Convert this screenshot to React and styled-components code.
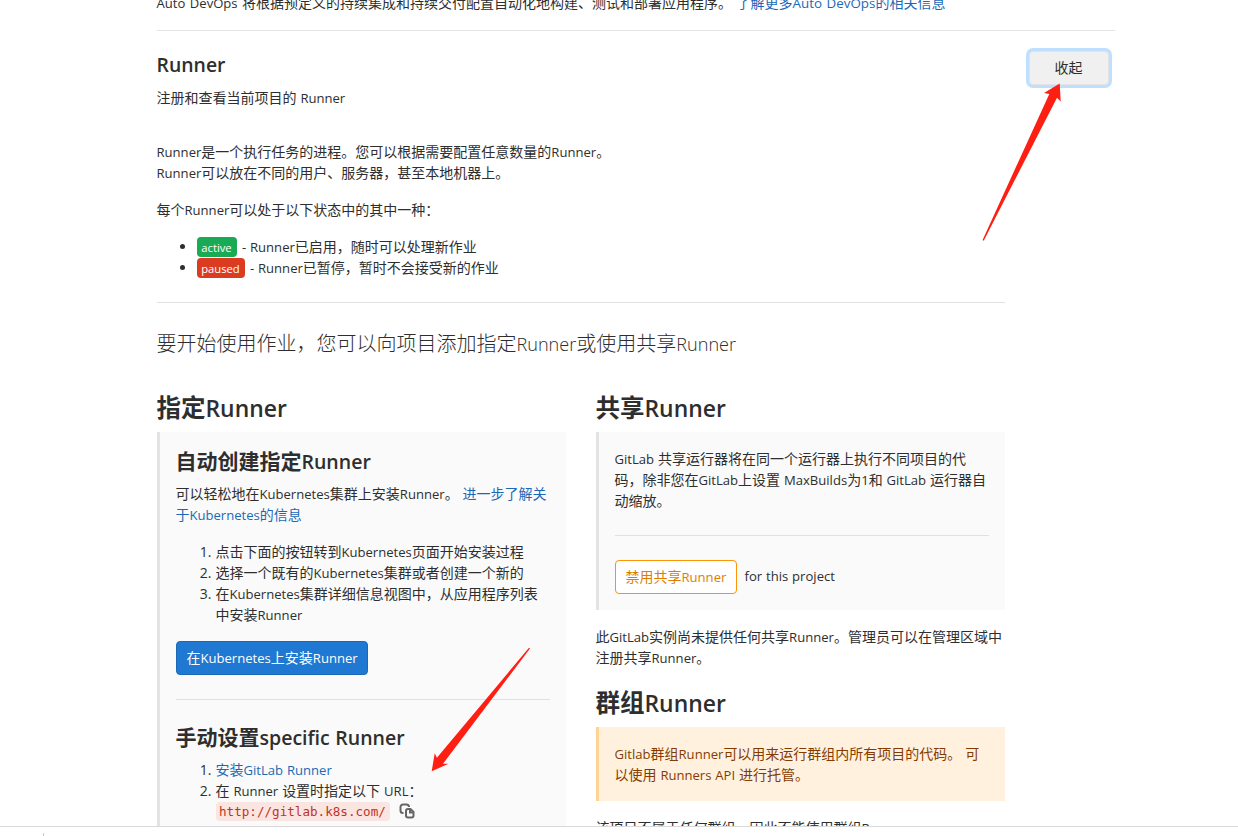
import React from 'react';
import styled, { createGlobalStyle } from 'styled-components';

const GlobalStyle = createGlobalStyle`
  * { box-sizing: border-box; }
  html, body { margin: 0; background: #fff; overflow: hidden; }
  body {
    font-family: "Open Sans", "Noto Sans CJK SC", sans-serif;
    font-size: 14px;
    line-height: 21px;
    word-spacing: 0.5px;
    color: #2e2e2e;
  }
`;

const Latin = styled.span`
  font-size: ${(p) => p.$scale || 0.935}em;
  line-height: 0;
`;

// Sets Latin runs slightly smaller so they sit evenly beside Chinese glyphs.
function T({ children, scale }) {
  return String(children)
    .split(/([\x20-\x7e]+)/)
    .map((part, i) => (i % 2 ? <Latin key={i} $scale={scale}>{part}</Latin> : part));
}

const Screen = styled.div`
  position: relative;
  height: 836px;
  overflow: hidden;
  display: flex;
  flex-direction: column;
`;

const Viewport = styled.main`
  height: 826px;
  overflow: hidden;
  padding: 0 123px 0 156.5px;
`;

const BottomBar = styled.footer`
  height: 10px;
  border-top: 1px solid #d9d9d9;
  padding: 6px 0 0 43px;
`;

const Tick = styled.div`
  width: 1px;
  height: 3px;
  background: #c8c8c8;
`;

const Link = styled.a`
  color: #1b69b6;
  text-decoration: none;
`;

const Text = styled.p`
  margin: 0 0 ${(p) => p.$gap ?? 16}px;
  white-space: nowrap;
`;

const DevOps = styled.section`
  margin-top: -8px;
  padding-bottom: 17px;
  border-bottom: 1px solid #e5e5e5;
  word-spacing: 1.1px;
`;

const SectionHead = styled.header`
  display: flex;
  justify-content: space-between;
  padding: 20px 6px 0 0;
  height: 110px;
`;

const Title = styled.h4`
  margin: 0 0 10px;
  padding-top: 1px;
  font-size: 21px;
  line-height: 25px;
  font-weight: 600;
`;

const SubTitle = styled.h4`
  margin: 0 0 9px;
  font-size: 21px;
  line-height: 26px;
  font-weight: 600;
  white-space: nowrap;
`;

const ColumnTitle = styled.h3`
  margin: ${(p) => (p.$spaced ? 19 : 0)}px 0 8px;
  font-size: 24.5px;
  line-height: 32px;
  font-weight: 600;
`;

const Lead = styled.p`
  margin: 0 0 33px;
  font-size: 20px;
  line-height: 30px;
  font-weight: 300;
  white-space: nowrap;
`;

const Button = styled.button`
  height: 34px;
  padding: 0 10px 2px;
  border-radius: 4px;
  border: 1px solid #e3e3e3;
  background: #f0f0f0;
  color: #2e2e2e;
  font: inherit;
  word-spacing: inherit;
  white-space: nowrap;
`;

const ToggleButton = styled(Button)`
  width: 80px;
  padding: 0 1px 2px 0;
  box-shadow: 0 0 0 3px #bfdfff;
`;

const PrimaryButton = styled(Button)`
  width: 192px;
  background: #1f78d1;
  border-color: #1b69b6;
  color: #fff;
`;

const WarningButton = styled(Button)`
  width: 122px;
  background: #fff;
  border-color: #fc9403;
  color: #de7e00;
`;

const Content = styled.div`
  width: 848.5px;
`;

const Divider = styled.hr`
  margin: ${(p) => p.$top}px 0 ${(p) => p.$bottom}px;
  border: 0;
  height: 1px;
  background: #e1e1e1;
`;

const List = styled.ul`
  margin: 0 0 16px;
  padding-left: 40px;
`;

const Badge = styled.span`
  display: inline-block;
  height: 20px;
  padding: 0 4px;
  width: ${(p) => p.$width}px;
  border-radius: 4px;
  background: ${(p) => p.$color};
  color: #fff;
  font-size: 12px;
  line-height: 21px;
  text-align: center;
  vertical-align: top;
  margin: 1px 1.5px 0 0;
`;

const Columns = styled.div`
  display: grid;
  grid-template-columns: 409px 409px;
  gap: 30px;
`;

const Well = styled.div`
  padding: 16px;
  border-left: 3px solid ${(p) => (p.$warn ? '#ffd393' : '#e3e3e3')};
  background: ${(p) => (p.$warn ? '#fff1de' : '#fafafa')};
  color: ${(p) => (p.$warn ? '#853b00' : 'inherit')};
  margin-bottom: 16px;
`;

const Inline = styled.div`
  display: flex;
  align-items: center;
  gap: 8px;
`;

const Note = styled.span`
  padding-bottom: 3px;
`;

const CodeLine = styled.div`
  display: flex;
  align-items: center;
  height: 21px;
`;

const Code = styled.code`
  height: 19px;
  padding: 0 3.5px;
  width: 174px;
  border-radius: 4px;
  background: #fbe5e1;
  color: #c0341d;
  font-family: "DejaVu Sans Mono", monospace;
  font-size: 12.6px;
  line-height: 19px;
`;

const CopyIcon = styled.svg`
  width: 16px;
  height: 16px;
  margin: 0 0 2px 9px;
`;

const Arrows = styled.svg`
  position: absolute;
  inset: 0;
  width: 1238px;
  height: 836px;
  pointer-events: none;
`;

export default function App() {
  return (
    <>
      <GlobalStyle />
      <Screen>
        <Viewport>
          <DevOps>
            <Text $gap={0}>
              <T>Auto DevOps 将根据预定义的持续集成和持续交付配置自动化地构建、测试和部署应用程序。 </T>
              <Link><T scale={0.955}>了解更多Auto DevOps的相关信息</T></Link>
            </Text>
          </DevOps>
          <SectionHead>
            <div>
              <Title><T scale={0.925}>Runner</T></Title>
              <Text><T>注册和查看当前项目的 Runner</T></Text>
            </div>
            <ToggleButton>收起</ToggleButton>
          </SectionHead>
          <Content>
            <Text>
              <T>Runner是一个执行任务的进程。您可以根据需要配置任意数量的Runner。</T><br />
              <T>Runner可以放在不同的用户、服务器，甚至本地机器上。</T>
            </Text>
            <Text><T>每个Runner可以处于以下状态中的其中一种：</T></Text>
            <List>
              <li><Badge $color="#1aaa55" $width={40}><T>active</T></Badge><T> - Runner已启用，随时可以处理新作业</T></li>
              <li><Badge $color="#db3b21" $width={48}><T>paused</T></Badge><T> - Runner已暂停，暂时不会接受新的作业</T></li>
            </List>
            <Divider $top={24} $bottom={26} />
            <Lead><T scale={0.905}>要开始使用作业，您可以向项目添加指定Runner或使用共享Runner</T></Lead>
            <Columns>
              <div>
                <ColumnTitle><T>指定Runner</T></ColumnTitle>
                <Well>
                  <SubTitle><T scale={0.93}>自动创建指定Runner</T></SubTitle>
                  <Text>
                    <T>可以轻松地在Kubernetes集群上安装Runner。 </T>
                    <Link><T>进一步了解关</T><br /><T>于Kubernetes的信息</T></Link>
                  </Text>
                  <List as="ol">
                    <li><T>点击下面的按钮转到Kubernetes页面开始安装过程</T></li>
                    <li><T>选择一个既有的Kubernetes集群或者创建一个新的</T></li>
                    <li><T>在Kubernetes集群详细信息视图中，从应用程序列表</T><br /><T>中安装Runner</T></li>
                  </List>
                  <PrimaryButton><T>在Kubernetes上安装Runner</T></PrimaryButton>
                  <Divider $top={24} $bottom={24} />
                  <SubTitle><T scale={0.93}>手动设置specific Runner</T></SubTitle>
                  <List as="ol">
                    <li><Link><T>安装GitLab Runner</T></Link></li>
                    <li>
                      <T>在 Runner 设置时指定以下 URL：</T>
                      <CodeLine>
                        <Code>http://gitlab.k8s.com/</Code>
                        <CopyIcon viewBox="0 0 16 16" fill="none" stroke="#666" strokeWidth="2">
                          <path d="M4.500 10H4a2.500 2.500 0 0 1-2.500-2.500V4A2.500 2.500 0 0 1 4 1.500h3.500A2.500 2.500 0 0 1 10 4" />
                          <path d="M9 6h2.500L14.500 9v3.500a2 2 0 0 1-2 2H9a2 2 0 0 1-2-2V8a2 2 0 0 1 2-2z" />
                          <path d="M11 6v3.500h3.500" />
                        </CopyIcon>
                      </CodeLine>
                    </li>
                  </List>
                </Well>
              </div>
              <div>
                <ColumnTitle><T>共享Runner</T></ColumnTitle>
                <Well>
                  <Text $gap={0}>
                    <T>GitLab 共享运行器将在同一个运行器上执行不同项目的代</T><br />
                    <T>码，除非您在GitLab上设置 MaxBuilds为1和 GitLab 运行器自</T><br />
                    <T>动缩放。</T>
                  </Text>
                  <Divider $top={24} $bottom={24} />
                  <Inline>
                    <WarningButton><T>禁用共享Runner</T></WarningButton>
                    <Note><T>for this project</T></Note>
                  </Inline>
                </Well>
                <Text>
                  <T>此GitLab实例尚未提供任何共享Runner。管理员可以在管理区域中</T><br />
                  <T>注册共享Runner。</T>
                </Text>
                <ColumnTitle $spaced><T>群组Runner</T></ColumnTitle>
                <Well $warn>
                  <Text $gap={0}>
                    <T>Gitlab群组Runner可以用来运行群组内所有项目的代码。 可</T><br />
                    <T>以使用 Runners API 进行托管。</T>
                  </Text>
                </Well>
                <Text><T>该项目不属于任何群组，因此不能使用群组R</T></Text>
              </div>
            </Columns>
          </Content>
        </Viewport>
        <BottomBar><Tick /></BottomBar>
        <Arrows viewBox="0 0 1238 836" fill="#ff1f12">
          <path d="M1059.700 83.500 L1044 93 L1049.300 94 L982.600 240 L983.700 240.700 L1057 97.700 L1060.700 101.500 Z" />
          <path d="M431.700 771.200 L434.700 753.300 L436.900 757.700 L529 647.700 L530 648.500 L443 763.700 L448.500 763.700 Z" />
        </Arrows>
      </Screen>
    </>
  );
}
